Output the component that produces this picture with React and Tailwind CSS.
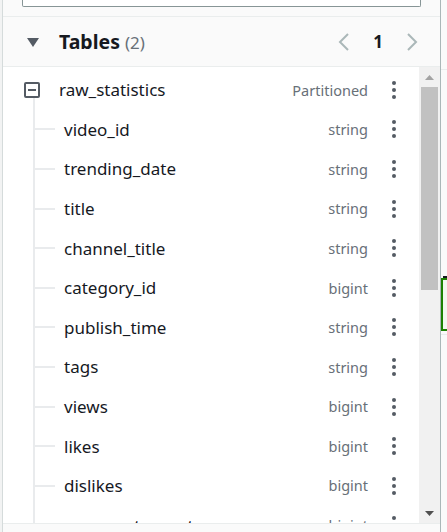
import React from "react";

const columns = [
  ["video_id", "string"],
  ["trending_date", "string"],
  ["title", "string"],
  ["channel_title", "string"],
  ["category_id", "bigint"],
  ["publish_time", "string"],
  ["tags", "string"],
  ["views", "bigint"],
  ["likes", "bigint"],
  ["dislikes", "bigint"],
  ["comment_count", "bigint"],
];

function Kebab() {
  return (
    <div className="w-[20px] flex flex-col items-center gap-[3px]">
      <span className="w-[4px] h-[4px] rounded-full bg-[#545b64]" />
      <span className="w-[4px] h-[4px] rounded-full bg-[#545b64]" />
      <span className="w-[4px] h-[4px] rounded-full bg-[#545b64]" />
    </div>
  );
}

function Row({ left, name, type }) {
  return (
    <div className="flex h-[39.6px] items-stretch shrink-0">
      {left}
      <div className="flex-1 flex items-center text-[17px] text-[#16191f] leading-none">{name}</div>
      <div className="flex items-center text-[14.5px] text-[#687078] leading-none">{type}</div>
      <div className="flex items-center ml-[16px] mr-[15px]">
        <Kebab />
      </div>
    </div>
  );
}

export default function App() {
  return (
    <div
      className="w-[447px] h-[532px] overflow-hidden flex bg-[#f2f3f3]"
      style={{ fontFamily: '"Noto Sans", "Open Sans", sans-serif' }}
    >
      <div className="w-[2px] shrink-0" />
      <div className="w-[439px] shrink-0 flex flex-col border-l border-r border-l-[#d5dbdb] border-r-[#aab7b8] bg-[#fafafa]">
        <div className="h-[17px] shrink-0 px-[19px] border-b border-[#eaeded]">
          <div className="h-[7px] bg-white border-x border-b border-[#879596] rounded-b-[2px]" />
        </div>
        <div className="h-[50px] shrink-0 flex items-center border-b border-[#eaeded]">
          <svg width="12" height="9" viewBox="0 0 12 9" className="ml-[24px] mt-[1px]">
            <polygon points="0,0 12,0 6,9" fill="#545b64" />
          </svg>
          <div className="ml-[20px] flex items-baseline gap-[5px]">
            <span className="text-[19.5px] font-bold text-[#16191f]">Tables</span>
            <span className="text-[17px] text-[#687078]">(2)</span>
          </div>
          <div className="ml-auto flex items-center mr-[21px]">
            <svg width="14" height="20" viewBox="0 0 14 20">
              <polyline points="11,2 3,10 11,18" fill="none" stroke="#aab7b8" strokeWidth="2" />
            </svg>
            <span className="mx-[22px] text-[17px] font-bold text-[#16191f] leading-none">1</span>
            <svg width="14" height="20" viewBox="0 0 14 20">
              <polyline points="3,2 11,10 3,18" fill="none" stroke="#aab7b8" strokeWidth="2" />
            </svg>
          </div>
        </div>
        <div className="flex-1 min-h-0 flex bg-white">
          <div className="flex-1 min-w-0 flex flex-col overflow-hidden pt-[3px]">
            <Row
              left={
                <div className="w-[56px] flex flex-col items-start pl-[21px] shrink-0">
                  <div className="flex-1" />
                  <div className="w-[16px] h-[16px] border-2 border-[#545b64] rounded-[2px] flex items-center justify-center">
                    <div className="w-[8px] h-[2px] bg-[#545b64]" />
                  </div>
                  <div className="flex-1 w-[2px] ml-[9px] bg-[#e9ebed]" />
                </div>
              }
              name="raw_statistics"
              type="Partitioned"
            />
            {columns.map(([n, t]) => (
              <Row
                key={n}
                left={
                  <div className="flex items-stretch shrink-0 mr-[9px]">
                    <div className="ml-[30px] w-[2px] bg-[#e9ebed]" />
                    <div className="self-center h-[2px] w-[20px] bg-[#e9ebed]" />
                  </div>
                }
                name={n}
                type={t}
              />
            ))}
          </div>
          <div className="w-[21px] shrink-0 flex flex-col bg-[#f1f1f1]">
            <div className="h-[20px] flex items-center justify-center shrink-0">
              <svg width="9" height="5" viewBox="0 0 9 5"><polygon points="0,5 9,5 4.5,0" fill="#a3a3a3" /></svg>
            </div>
            <div className="h-[203px] mx-[2px] bg-[#c1c1c1] shrink-0" />
            <div className="flex-1" />
            <div className="h-[20px] flex items-center justify-center shrink-0">
              <svg width="9" height="5" viewBox="0 0 9 5"><polygon points="0,0 9,0 4.5,5" fill="#505050" /></svg>
            </div>
          </div>
        </div>
        <div className="h-[9px] shrink-0 border-t border-[#eaeded] bg-[#fafafa]" />
      </div>
      <div className="flex-1 flex flex-col bg-[#fafafa]">
        <div className="h-[70px] border-b border-[#eaeded] shrink-0" />
        <div className="h-[206px] shrink-0" />
        <div className="h-[2px] ml-[2px] bg-[#16191f] shrink-0" />
        <div className="h-[53px] border-2 border-r-0 border-[#1d8102] bg-[#f2f8f0] shrink-0" />
        <div className="h-[4px] border-b border-[#eaeded] shrink-0" />
      </div>
    </div>
  );
}
